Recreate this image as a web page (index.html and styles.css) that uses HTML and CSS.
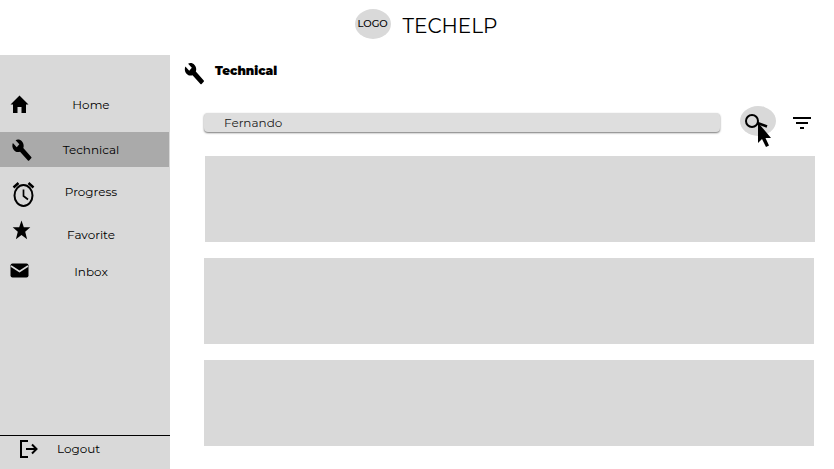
FILE: index.html
```html
<!DOCTYPE html>
<html lang="en">
<head>
<meta charset="utf-8">
<meta name="viewport" content="width=device-width, initial-scale=1">
<title>Techelp</title>
<link rel="stylesheet" href="styles.css">
</head>
<body>
<header class="header">
  <span class="logo">LOGO</span>
  <span class="brand">TECHELP</span>
</header>
<div class="shell">
  <aside class="sidebar">
    <nav class="nav">
      <a class="item" href="#home"><svg viewBox="0 0 44 35" aria-hidden="true"><path d="M19.5 8.500 28.500 17.500H26V26H21.500V20H17.500V26H13V17.500H10.500Z"/></svg><span>Home</span></a>
      <a class="item active" href="#technical" aria-current="page"><svg viewBox="0 0 44 35" aria-hidden="true"><path transform="translate(11.500 6.500) scale(.87 .97)" d="M22.700 19 13.600 9.900c.9-2.300.4-5-1.500-6.900-2-2-5-2.400-7.400-1.300L9 6 6 9 1.600 4.700C.4 7.100.9 10.100 2.900 12.100c1.900 1.900 4.600 2.400 6.900 1.500l9.100 9.100c.4.4 1 .4 1.400 0l2.300-2.300c.5-.4.5-1.100.1-1.400z"/></svg><span>Technical</span></a>
      <a class="item" href="#progress"><svg viewBox="0 0 44 35" aria-hidden="true"><g fill="none" stroke="#000" stroke-width="2"><ellipse cx="23.500" cy="20.500" rx="9" ry="10.500"/><path d="M13.500 12.500 18.500 8M28.500 8l5 4.500" stroke-width="2.500"/><path d="M23.500 14.500V21l4.500 3.500" stroke-width="1.700"/></g></svg><span>Progress</span></a>
      <a class="item" href="#favorite"><svg viewBox="0 0 44 35" aria-hidden="true"><path d="m21.500 2.500 2.300 6.800h6.500l-5.100 4.400 1.900 7.600-5.600-4.400-5.600 4.400 1.900-7.600-5.100-4.400h6.500Z"/></svg><span>Favorite</span></a>
      <a class="item" href="#inbox"><svg viewBox="0 0 44 35" aria-hidden="true"><rect x="10.500" y="8.500" width="18" height="14" rx="2"/><path d="m11 11 8.500 5.500L28 11" fill="none" stroke="#d9d9d9" stroke-width="1.500"/></svg><span>Inbox</span></a>
    </nav>
    <a class="logout" href="#logout"><svg viewBox="0 0 20 20" aria-hidden="true"><path d="M9 2H2v16h7M7 10h11M13 5.500l4.500 4.500-4.500 4.500" fill="none" stroke="#000" stroke-width="2"/></svg><span>Logout</span></a>
  </aside>
  <main class="main">
    <div class="title">
      <svg viewBox="0 0 20 23" aria-hidden="true"><path transform="scale(.87 .97)" d="M22.700 19 13.600 9.900c.9-2.300.4-5-1.500-6.900-2-2-5-2.400-7.400-1.300L9 6 6 9 1.600 4.700C.4 7.100.9 10.100 2.900 12.100c1.900 1.900 4.600 2.400 6.900 1.500l9.100 9.100c.4.4 1 .4 1.400 0l2.300-2.300c.5-.4.5-1.100.1-1.400z"/></svg>
      <h1>Technical</h1>
    </div>
    <form class="search">
      <input type="text" aria-label="Search" value="Fernando">
      <button class="find" type="button" aria-label="Search"><svg viewBox="0 0 36 42" aria-hidden="true"><g fill="none" stroke="#000"><circle cx="12" cy="15" r="6" stroke-width="2"/><path d="m17.500 17 9.500 3.500" stroke-width="2.500"/></g><path d="M18 16.500V37l4-4 4 8 3-1.500-3.500-7.500H31Z"/></svg></button>
      <button class="filter" type="button" aria-label="Filter"><svg viewBox="0 0 18 12" aria-hidden="true"><path d="M0 0h18v2H0zM3 5h12v2H3zM7 10h4v2H7z"/></svg></button>
    </form>
    <section class="cards" aria-label="Results">
      <article class="card wide"></article>
      <article class="card"></article>
      <article class="card"></article>
    </section>
  </main>
</div>
</body>
</html>
```
FILE: styles.css
```css
* { box-sizing: border-box; }
body {
  margin: 0;
  min-height: 100vh;
  display: flex;
  flex-direction: column;
  background: #fff;
  color: #000;
  font: 400 12px/20px Montserrat, Inter, sans-serif;
}
a { color: inherit; text-decoration: none; }
svg { display: block; }
.header {
  display: flex;
  justify-content: center;
  align-items: flex-start;
  gap: 12px;
  padding: 9px 0 12px;
  margin-left: 18px;
}
.logo {
  display: grid;
  place-items: center;
  width: 36px;
  height: 30px;
  border-radius: 50%;
  background: #d9d9d9;
  font-size: 10px;
  font-weight: 500;
}
.brand { font-size: 20px; line-height: 34px; }
.shell {
  flex: 1;
  display: grid;
  grid-template-columns: 170px 1fr;
}
.sidebar {
  display: flex;
  flex-direction: column;
  justify-content: space-between;
  background: #d9d9d9;
}
.nav {
  display: grid;
  grid-template-rows: 55px 35px 50px 36px 38px;
  padding: 22px 1px 0 0;
}
.item {
  display: grid;
  grid-template-columns: 44px 94px;
  align-items: center;
  text-align: center;
}
.item svg { width: 44px; height: 35px; }
.active { background: #aaa; }
.logout {
  display: flex;
  align-items: center;
  gap: 18px;
  height: 34px;
  padding: 0 19px 8px;
  border-top: 1px solid #000;
}
.logout svg { width: 20px; height: 20px; }
.main { padding: 6px 19px 23px 34px; }
.title {
  display: flex;
  align-items: flex-start;
  gap: 11px;
  margin-left: -20px;
}
.title svg { width: 20px; height: 23px; margin-top: 1px; }
h1 { margin: 0; font-size: 12px; line-height: 20px; font-weight: 900; }
.search {
  display: flex;
  align-items: flex-start;
  margin-top: 21px;
}
.search input {
  flex: 1;
  min-width: 0;
  height: 19px;
  margin-top: 7px;
  padding: 0 20px;
  border: 0;
  border-radius: 4px;
  background: #dedede;
  box-shadow: 0 1px 2px #777;
  color: #222;
  font: inherit;
}
button { padding: 0; border: 0; background: none; }
.find {
  width: 36px;
  height: 30px;
  margin: 0 17px 0 20px;
  border-radius: 50%;
  background: #d9d9d9;
}
.find svg { width: 36px; height: 42px; }
.filter { margin: 11px 4px 0 0; }
.filter svg { width: 18px; height: 12px; }
.cards { display: grid; gap: 16px; margin-top: 20px; }
.card { height: 86px; margin-right: 1px; background: #d9d9d9; }
.wide { margin: 0 0 0 1px; }
```
